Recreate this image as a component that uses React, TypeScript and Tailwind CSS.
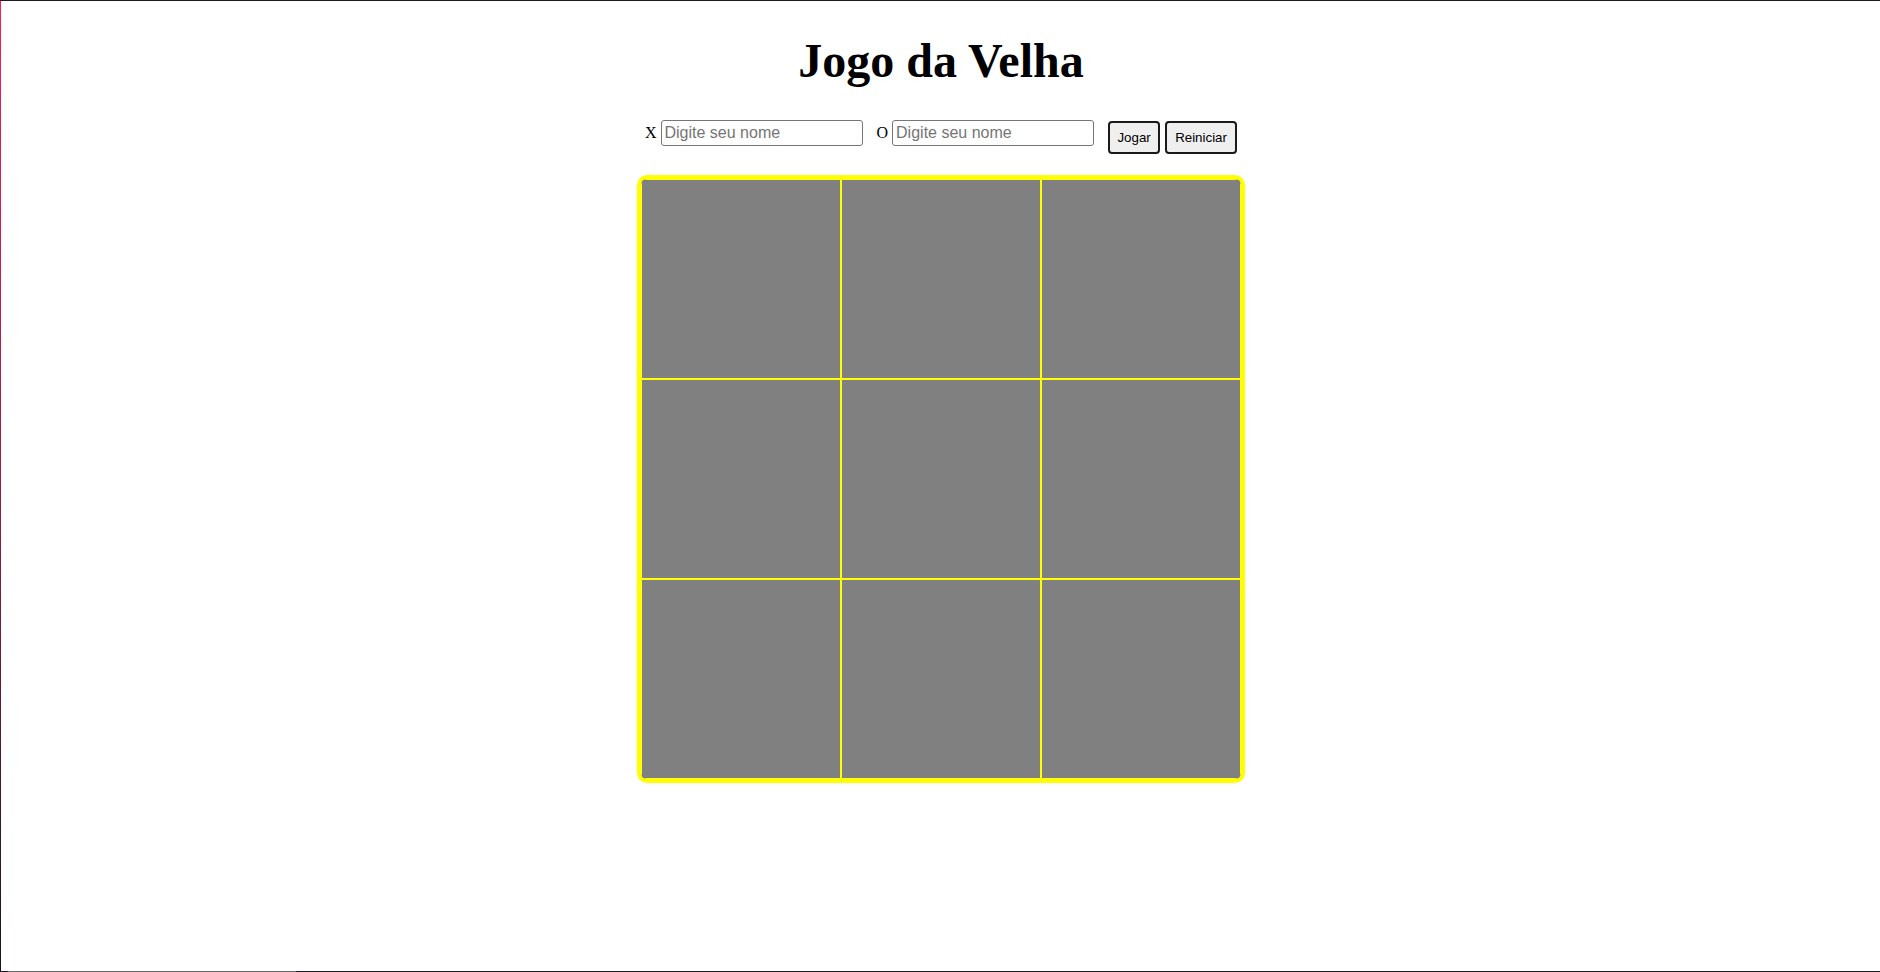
import React from "react";

export default function App() {
  const cells = Array.from({ length: 9 });
  return (
    <div className="flex h-[972px] w-[1880px] flex-col bg-white">
      <div className="h-px w-full bg-[#1c1a24]" />
      <div className="flex min-h-0 flex-1">
        <div className="w-px bg-gradient-to-b from-[#ff1a5c] via-[#a0184a] to-[#1c1018]" />
        <div className="flex flex-1 flex-col items-center pl-px">
          <h1
            className="mt-[33px] text-[48px] font-bold leading-[53px] text-black"
            style={{ fontFamily: '"Liberation Serif", "Times New Roman", serif' }}
          >
            Jogo da Velha
          </h1>
          <div className="mt-[33px] flex items-start">
            <label
              className="mr-[4px] mt-[3px] text-[16px] leading-[20px] text-black"
              style={{ fontFamily: '"Liberation Serif", "Times New Roman", serif' }}
            >
              X
            </label>
            <input
              type="text"
              placeholder="Digite seu nome"
              className="h-[26px] w-[202px] rounded-[3px] border border-[#767676] bg-white px-[3px] text-[16px] text-black placeholder:text-[#757575] outline-none"
              style={{ fontFamily: '"Liberation Sans", Arial, sans-serif' }}
            />
            <label
              className="ml-[14px] mr-[4px] mt-[3px] text-[16px] leading-[20px] text-black"
              style={{ fontFamily: '"Liberation Serif", "Times New Roman", serif' }}
            >
              O
            </label>
            <input
              type="text"
              placeholder="Digite seu nome"
              className="h-[26px] w-[202px] rounded-[3px] border border-[#767676] bg-white px-[3px] text-[16px] text-black placeholder:text-[#757575] outline-none"
              style={{ fontFamily: '"Liberation Sans", Arial, sans-serif' }}
            />
            <div className="ml-[14px] mt-px flex gap-[5px]">
              <button
                className="h-[33px] w-[52px] rounded-[4px] border-2 border-[#1a1a1a] bg-[#efefef] text-[13.33px] text-black"
                style={{ fontFamily: '"Liberation Sans", Arial, sans-serif' }}
              >
                Jogar
              </button>
              <button
                className="h-[33px] w-[72px] rounded-[4px] border-2 border-[#1a1a1a] bg-[#efefef] text-[13.33px] text-black"
                style={{ fontFamily: '"Liberation Sans", Arial, sans-serif' }}
              >
                Reiniciar
              </button>
            </div>
          </div>
          <div className="mt-[21px] grid h-[608px] w-[608px] grid-cols-3 overflow-hidden rounded-[10px] border-4 border-[#ffff00] bg-[#808080]">
            {cells.map((_, i) => (
              <div key={i} className="h-[200px] w-[200px] border border-[#ffff00] bg-[#808080]" />
            ))}
          </div>
        </div>
      </div>
      <div className="flex h-px w-full">
        <div className="w-[8px] bg-[#1c1a24]" />
        <div className="w-[288px] bg-[#666666]" />
        <div className="flex-1 bg-[#1c1a24]" />
      </div>
    </div>
  );
}
